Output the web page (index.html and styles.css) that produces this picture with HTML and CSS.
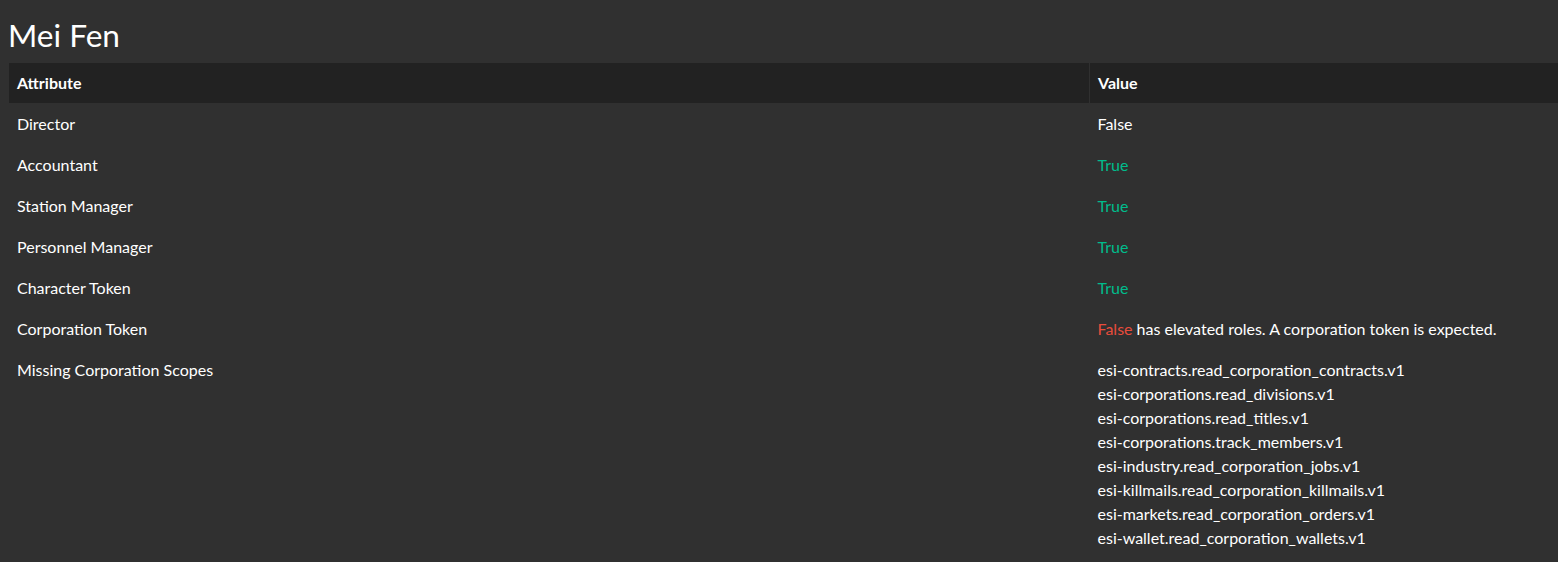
FILE: index.html
```html
<!DOCTYPE html>
<html>
<head>
<meta charset="utf-8">
<link rel="stylesheet" href="styles.css">
</head>
<body>
<div class="page">
  <h1 class="title">Mei Fen</h1>
  <table class="roles">
    <thead>
      <tr><th class="col-attr">Attribute</th><th class="col-val">Value</th></tr>
    </thead>
    <tbody>
      <tr><td>Director</td><td>False</td></tr>
      <tr><td>Accountant</td><td class="ok">True</td></tr>
      <tr><td>Station Manager</td><td class="ok">True</td></tr>
      <tr><td>Personnel Manager</td><td class="ok">True</td></tr>
      <tr><td>Character Token</td><td class="ok">True</td></tr>
      <tr><td>Corporation Token</td><td><span class="bad">False</span> has elevated roles. A corporation token is expected.</td></tr>
      <tr><td>Missing Corporation Scopes</td><td>
        <div>esi-contracts.read_corporation_contracts.v1</div>
        <div>esi-corporations.read_divisions.v1</div>
        <div>esi-corporations.read_titles.v1</div>
        <div>esi-corporations.track_members.v1</div>
        <div>esi-industry.read_corporation_jobs.v1</div>
        <div>esi-killmails.read_corporation_killmails.v1</div>
        <div>esi-markets.read_corporation_orders.v1</div>
        <div>esi-wallet.read_corporation_wallets.v1</div>
      </td></tr>
    </tbody>
  </table>
</div>
</body>
</html>
```
FILE: styles.css
```css
html, body {
  margin: 0;
  padding: 0;
  background: #303030;
  color: #fff;
  font-family: Lato, "Noto Sans", sans-serif;
  font-size: 16px;
  line-height: 24px;
  overflow: hidden;
}
.page {
  padding: 0 0 0 9px;
}
.title {
  font-weight: 400;
  font-size: 31.6px;
  line-height: 38px;
  margin: 0 0 0 -1px;
  padding: 16px 0 9px 0;
}
.roles {
  border-collapse: collapse;
  width: 1560px;
  table-layout: fixed;
}
.roles th {
  background: #222;
  font-weight: 700;
  text-align: left;
  padding: 8px 8px;
  line-height: 24px;
}
.roles .col-attr {
  width: 1064px;
  border-right: 1px solid #303030;
}
.roles td {
  padding: 8px 8px;
  border-top: 1px solid #303030;
  vertical-align: top;
}
.ok { color: #00bc8c; }
.bad { color: #e74c3c; }
```
